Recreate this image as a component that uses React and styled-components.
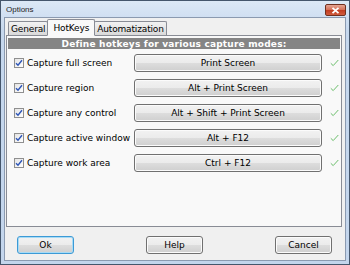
import React from "react";
import styled, { createGlobalStyle } from "styled-components";

const Global = createGlobalStyle`
  html, body { margin: 0; padding: 0; background: #ffffff; }
  * { box-sizing: border-box; }
`;

const Window = styled.div`
  width: 350px;
  height: 265px;
  border: 1px solid #45566c;
  background: linear-gradient(#dce8f6, #c6d8ee 30px, #c3d5ec);
  display: flex;
  flex-direction: column;
  font-family: "DejaVu Sans", Verdana, sans-serif;
  font-size: 9px;
  color: #000;
`;

const TitleBar = styled.div`
  height: 16px;
  display: flex;
  align-items: center;
  justify-content: space-between;
  padding: 0 3px 0 5px;
  font-family: "Liberation Sans", Arial, sans-serif;
  font-size: 8px;
  color: #1e1e1e;
`;

const CloseButton = styled.div`
  width: 21px;
  height: 12px;
  margin-top: 2px;
  border: 1px solid #70301f;
  border-radius: 2px;
  background: linear-gradient(#e5a593, #d46d55 50%, #c13b20 51%, #d05b3d);
  display: flex;
  align-items: center;
  justify-content: center;
`;

const Client = styled.div`
  flex: 1;
  margin: 0 3px 3px 3px;
  background: #f0f0f0;
  border: 1px solid #8b9ab0;
  display: flex;
  flex-direction: column;
  padding: 0 3px 0 1px;
`;

const TabRow = styled.div`
  display: flex;
  align-items: flex-end;
  height: 17px;
  padding-left: 2px;
  position: relative;
  z-index: 1;
`;

const Tab = styled.div`
  height: ${(p) => (p.$active ? "17px" : "14px")};
  padding: 0 ${(p) => (p.$active ? "5px" : "2px")};
  margin: 0 ${(p) => (p.$active ? "-1px" : "0")};
  border: 1px solid #898c95;
  border-bottom: ${(p) => (p.$active ? "1px solid #f9f9f9" : "none")};
  border-radius: 2px 2px 0 0;
  background: ${(p) =>
    p.$active ? "#f9f9f9" : "linear-gradient(#f2f2f2, #e6e6e6 50%, #d9d9d9)"};
  display: flex;
  align-items: center;
  position: relative;
  z-index: ${(p) => (p.$active ? 2 : 1)};
  margin-bottom: ${(p) => (p.$active ? "-1px" : "0")};
  white-space: nowrap;
  letter-spacing: -0.15px;
`;

const Panel = styled.div`
  flex: 1;
  border: 1px solid #898c95;
  background: #f9f9f9;
  padding: 2px 1px 0 1px;
  display: flex;
  flex-direction: column;
`;

const Header = styled.div`
  height: 11px;
  background: #858585;
  color: #fff;
  font-weight: bold;
  font-size: 9px;
  display: flex;
  align-items: center;
  justify-content: center;
  letter-spacing: 0.2px;
`;

const Rows = styled.div`
  display: flex;
  flex-direction: column;
  gap: 7px;
  padding-top: 5px;
`;

const Row = styled.div`
  display: grid;
  grid-template-columns: 120px 188px 1fr;
  align-items: center;
  height: 18px;
  padding-left: 6px;
`;

const Label = styled.label`
  display: flex;
  align-items: center;
  gap: 3px;
  white-space: nowrap;
`;

const Box = styled.span`
  width: 10px;
  height: 10px;
  border: 1px solid #8f8f8f;
  background: linear-gradient(135deg, #e4e4e4, #ffffff);
  display: flex;
  align-items: center;
  justify-content: center;
`;

const Button = styled.div`
  height: ${(p) => (p.$h ? p.$h : "18px")};
  width: ${(p) => (p.$w ? p.$w : "auto")};
  border: 1px solid ${(p) => (p.$default ? "#3c9ad6" : "#707070")};
  border-radius: 3px;
  background: linear-gradient(#f2f2f2, #ebebeb 50%, #dddddd 51%, #cfcfcf);
  box-shadow: inset 0 0 0 1px ${(p) => (p.$default ? "#a8dbf5" : "#fbfbfb")};
  display: flex;
  align-items: center;
  justify-content: center;
  white-space: nowrap;
`;

const Ok = styled.span`
  display: flex;
  padding-left: 8px;
`;

const Footer = styled.div`
  height: 33px;
  display: flex;
  align-items: flex-start;
  justify-content: space-between;
  padding: 9px 10px 0 11px;
`;

const Check = () => (
  <svg width="8" height="8" viewBox="0 0 8 8">
    <path d="M1 4.2 L3 6.3 L7 1.2" fill="none" stroke="#2d55b8" strokeWidth="1.4" />
  </svg>
);

const GreenTick = () => (
  <svg width="9" height="8" viewBox="0 0 9 8">
    <path d="M0.8 4.3 L3.2 6.6 L8.3 1" fill="none" stroke="#5cb85c" strokeWidth="0.9" />
  </svg>
);

const CloseX = () => (
  <svg width="9" height="7" viewBox="0 0 9 7">
    <path d="M1.5 0.8 L7.5 6.2 M7.5 0.8 L1.5 6.2" stroke="#ffffff" strokeWidth="1.8" />
  </svg>
);

const rows = [
  ["Capture full screen", "Print Screen"],
  ["Capture region", "Alt + Print Screen"],
  ["Capture any control", "Alt + Shift + Print Screen"],
  ["Capture active window", "Alt + F12"],
  ["Capture work area", "Ctrl + F12"],
];

export default function App() {
  return (
    <>
      <Global />
      <Window>
        <TitleBar>
          <span>Options</span>
          <CloseButton>
            <CloseX />
          </CloseButton>
        </TitleBar>
        <Client>
          <TabRow>
            <Tab>General</Tab>
            <Tab $active>HotKeys</Tab>
            <Tab>Automatization</Tab>
          </TabRow>
          <Panel>
            <Header>Define hotkeys for various capture modes:</Header>
            <Rows>
              {rows.map(([label, key]) => (
                <Row key={label}>
                  <Label>
                    <Box>
                      <Check />
                    </Box>
                    {label}
                  </Label>
                  <Button>{key}</Button>
                  <Ok>
                    <GreenTick />
                  </Ok>
                </Row>
              ))}
            </Rows>
          </Panel>
          <Footer>
            <Button $default $w="57px" $h="18px">Ok</Button>
            <Button $w="57px" $h="18px">Help</Button>
            <Button $w="57px" $h="18px">Cancel</Button>
          </Footer>
        </Client>
      </Window>
    </>
  );
}
